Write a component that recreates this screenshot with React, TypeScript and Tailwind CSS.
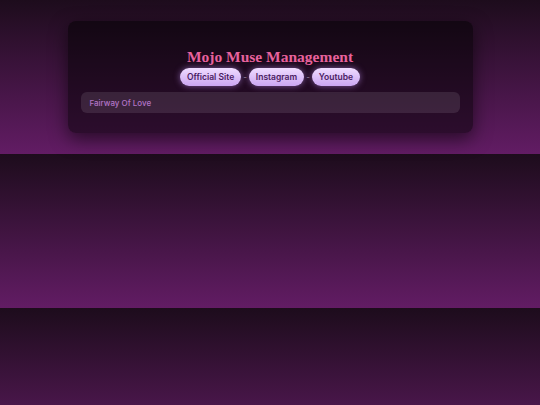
export default function App() {
  const links = ["Official Site", "Instagram", "Youtube"];

  return (
    <div className="h-[405px] w-full overflow-hidden bg-[linear-gradient(to_bottom,#1d0c1c,#621c64)] bg-[length:100%_154px] bg-repeat font-['Inter','Noto_Sans',sans-serif]">
      <div className="pt-[21px]">
        <div className="mx-auto w-3/4 rounded-lg bg-black/50 px-[13px] pt-[23px] pb-[20px] shadow-[0_6px_18px_rgba(0,0,0,0.55)]">
          <h1 className="pt-[1px] text-center font-['Liberation_Serif',serif] text-[15.5px] font-bold leading-[23px] text-[#e8629c]">
            Mojo Muse Management
          </h1>
          <div className="flex items-center justify-center">
            {links.map((label, i) => (
              <div key={label} className="flex items-center">
                {i > 0 && <span className="px-[2px] text-[8px] text-[#9a8aa0]">-</span>}
                <a
                  href="#"
                  className="flex h-[18px] items-center rounded-full bg-[linear-gradient(to_bottom,#efdcff,#cba6f2)] px-[7px] text-[8.5px] font-semibold text-[#4a1c62] shadow-[0_0_6px_rgba(200,150,255,0.55)]"
                >
                  {label}
                </a>
              </div>
            ))}
          </div>
          <div className="mt-[6px] flex h-[21px] items-center rounded-md bg-white/10 pl-[9px] text-[8px] font-medium text-[#b274c6]">
            Fairway Of Love
          </div>
        </div>
      </div>
    </div>
  );
}
